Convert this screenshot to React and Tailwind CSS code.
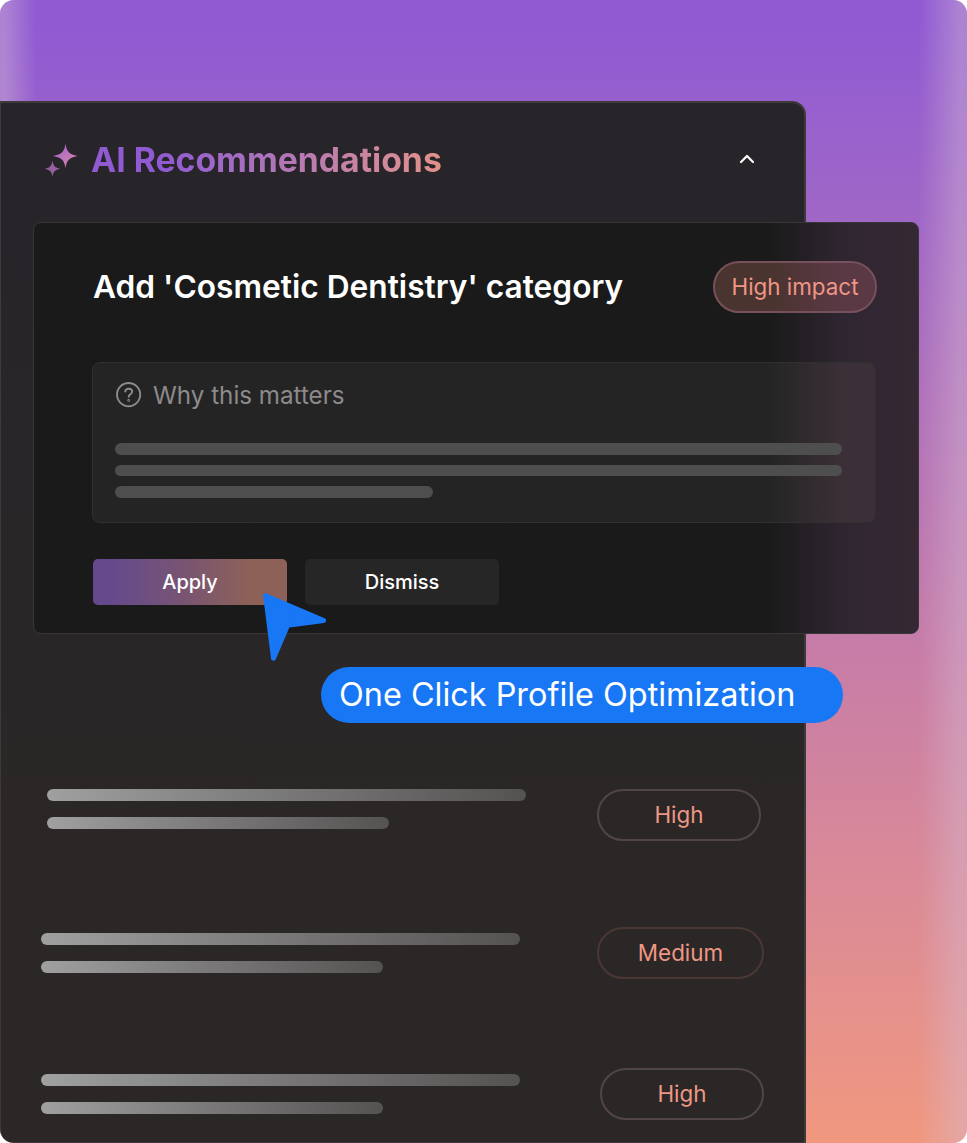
import React from 'react';
import { clsx } from 'clsx';

const recommendations = [
  { impact: 'High', row: 'mt-[155px] pl-[46px]', badge: 'ml-[71px] w-[164px] border-[#514547]' },
  { impact: 'Medium', row: 'mt-[86px] pl-10', bars: 'mt-1.5', badge: 'ml-[77px] w-[167px] border-[#4b3733]' },
  { impact: 'High', row: 'mt-[89px] pl-10', bars: 'mt-1.5', badge: 'ml-20 w-[164px] border-[#514547]' },
];

const SparklesIcon = () => (
  <svg width="34" height="34" viewBox="0 0 34 34" className="-ml-px shrink-0">
    <defs>
      <linearGradient id="sparkle" x1="0" y1="0" x2="0.6" y2="1">
        <stop offset="0" stopColor="#9a62d0" />
        <stop offset="1" stopColor="#d782ad" />
      </linearGradient>
    </defs>
    <path
      d="M21.5 0.5C22.6 8.6 25.1 11.4 33.5 12.9C25.1 14.4 22.6 17.2 21.5 25.2C20.4 17.2 17.9 14.4 9 12.9C17.9 11.4 20.4 8.6 21.5 0.5Z"
      fill="url(#sparkle)"
    />
    <path
      d="M8.5 17.5C9.3 22.9 11 24.8 16.3 25.8C11 26.8 9.3 28.7 8.5 33.8C7.7 28.7 6 26.8 0.7 25.8C6 24.8 7.7 22.9 8.5 17.5Z"
      fill="#95609f"
    />
  </svg>
);

const HelpIcon = () => (
  <svg width="26" height="26" viewBox="0 0 26 26" fill="none" stroke="#8d8a8b" strokeWidth="1.9" strokeLinecap="round">
    <circle cx="12.6" cy="12.6" r="11.6" />
    <path d="M9.2 9.6C9.5 7.7 10.9 6.7 12.7 6.7C14.6 6.7 16.2 7.9 16.2 9.6C16.2 12.2 12.7 12.3 12.7 14.8" />
    <circle cx="12.7" cy="18.4" r="0.45" />
  </svg>
);

const CursorIcon = () => (
  <svg width="66" height="70" viewBox="0 0 66 70" className="absolute left-[262px] top-[592px]">
    <path
      d="M3.6 3.8L61.6 28.5L25.6 33.2L11.5 66.2Z"
      fill="#1877f5"
      stroke="#1877f5"
      strokeWidth="5"
      strokeLinejoin="round"
    />
  </svg>
);

const ImpactBadge = ({ children, className }) => (
  <span
    className={clsx(
      'flex h-[52px] shrink-0 items-center justify-center rounded-full border-2 text-[22.4px] text-[#ee9784]',
      className
    )}
  >
    {children}
  </span>
);

const RecommendationRow = ({ impact, row, bars, badge }) => (
  <div className={clsx('flex items-start', row)}>
    <div className={clsx('flex w-[479px] flex-col gap-4', bars)}>
      <div className="h-3 rounded-full bg-linear-to-r from-[#a0a0a0] to-[#555252]" />
      <div className="h-3 w-[342px] rounded-full bg-linear-to-r from-[#a0a0a0] to-[#555252]" />
    </div>
    <ImpactBadge className={badge}>{impact}</ImpactBadge>
  </div>
);

const RecommendationCard = () => (
  <div className="relative ml-8 mt-[118px] h-[412px] w-[886px] rounded-lg border border-[#383637] bg-linear-to-r from-[#1a1a1a] from-[83%] via-[#302632] via-[92%] to-[#342832] pl-[58px] pr-[41px] pt-[38px]">
    <div className="flex items-center justify-between">
      <h2 className="whitespace-nowrap pl-px text-[31.7px] font-semibold leading-[48px] text-white">
        Add 'Cosmetic Dentistry' category
      </h2>
      <ImpactBadge className="w-[164px] border-[#76505a] bg-linear-to-r from-[#4a342f] from-35% to-[#5a3844] to-75%">
        High impact
      </ImpactBadge>
    </div>

    <div className="mt-[49px] h-[161px] w-[784px] rounded-lg border border-[#303030] bg-linear-to-r from-[#242424] from-[86%] to-[#3b3037] to-[96%] pl-[22px] pt-[17px]">
      <div className="flex h-[29px] items-center gap-[11px] pl-px text-[24.2px] text-[#8d8a8b]">
        <HelpIcon />
        <span className="pt-[3px]">Why this matters</span>
      </div>
      <div className="mt-[34px] flex flex-col gap-[10px]">
        <div className="h-3 w-[727px] rounded-full bg-[#4e4e4e]" />
        <div className="h-[11px] w-[727px] rounded-full bg-[#4e4e4e]" />
        <div className="h-3 w-[318px] rounded-full bg-[#4e4e4e]" />
      </div>
    </div>

    <div className="mt-9 flex gap-[18px] pl-px text-xl font-medium text-white">
      <button className="h-[46px] w-[194px] rounded-[5px] bg-linear-to-r from-[#65498c] from-10% via-[#7a5570] via-50% to-[#8d6158] to-80%">
        Apply
      </button>
      <button className="h-[46px] w-[194px] rounded-[5px] bg-[#272627]">Dismiss</button>
    </div>
  </div>
);

const App = () => (
  <div className="bg-white font-['Inter',sans-serif]">
    <div className="relative h-[1143px] w-[967px] overflow-hidden rounded-[14px] bg-linear-to-b from-[#905ad3] from-[2%] via-[#c87da6] via-[58%] to-[#f1987f] pt-[101px]">
      {/* Light haze down both edges */}
      <div className="absolute inset-y-0 left-0 w-9 bg-linear-to-r from-[#d5bad3]/42 from-15% to-[#d5bad3]/0" />
      <div className="absolute inset-y-0 right-0 w-12 bg-linear-to-l from-[#d5bad3]/42 from-15% to-[#d5bad3]/0" />

      <div className="relative h-[1042px] w-[806px] rounded-tr-[14px] border border-r-2 border-t-2 border-[#3e3a3b] bg-linear-to-b from-[#28252a] from-15% to-[#2b2726] to-75%">
        <div className="flex h-0 items-center pl-11 pr-[49px] pt-[1px]">
          <div className="mt-[111px] flex w-full items-center">
            <SparklesIcon />
            <h1 className="-mt-px ml-[13px] whitespace-nowrap bg-linear-to-r from-[#905ad3] from-20% to-[#e39188] bg-clip-text text-[33.75px] font-bold leading-[47px] text-transparent">
              AI Recommendations
            </h1>
            <svg width="16" height="10" viewBox="0 0 16 10" className="-mt-0.5 ml-auto" fill="none" stroke="white" strokeWidth="2.2" strokeLinecap="round" strokeLinejoin="round">
              <path d="M2 8L8 2L14 8" />
            </svg>
          </div>
        </div>

        <RecommendationCard />

        {recommendations.map((item, i) => (
          <RecommendationRow key={i} {...item} />
        ))}
      </div>

      <CursorIcon />
      <div className="absolute left-[321px] top-[667px] flex h-14 w-[522px] items-center whitespace-nowrap rounded-full bg-[#1877f5] pl-[18px] text-[32.4px] text-white">
        One Click Profile Optimization
      </div>
    </div>
  </div>
);

export default App;
